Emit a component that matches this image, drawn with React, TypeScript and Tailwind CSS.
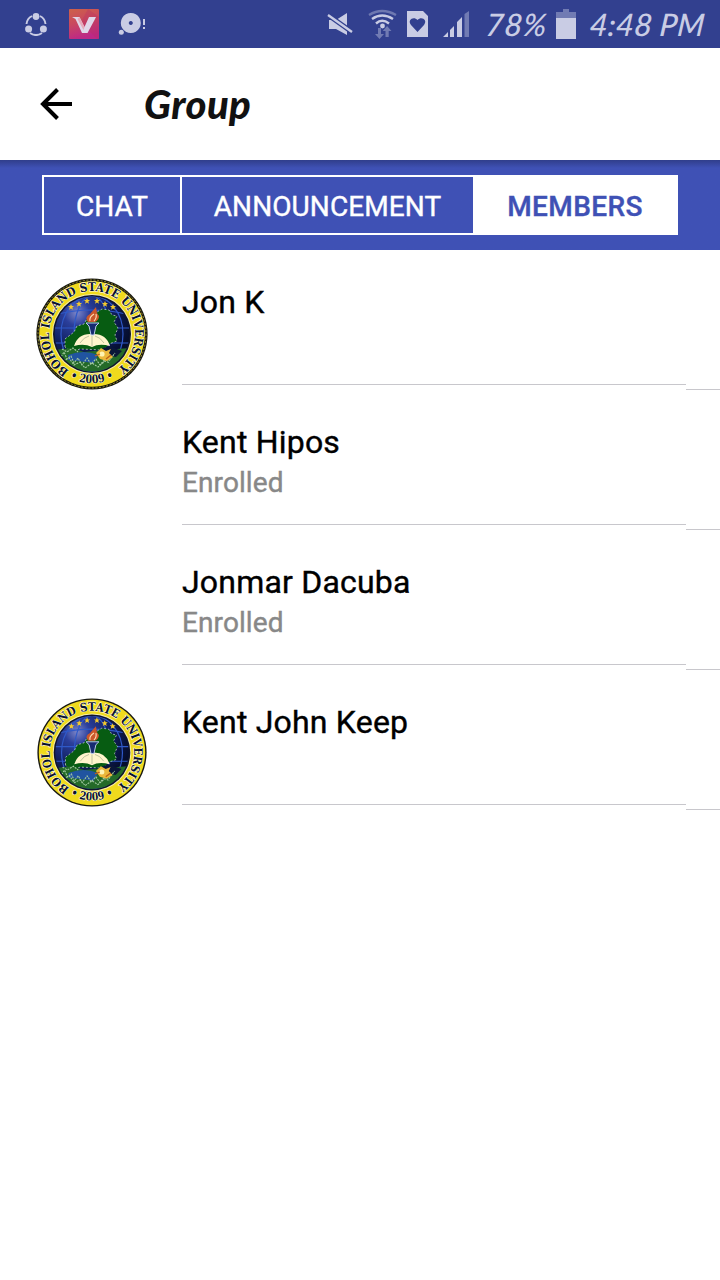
import { useId } from 'react';

type Member = { name: string; status?: string; avatar?: 'roped' | 'plain' };

const members: Member[] = [
  { name: 'Jon K', avatar: 'roped' },
  { name: 'Kent Hipos', status: 'Enrolled' },
  { name: 'Jonmar Dacuba', status: 'Enrolled' },
  { name: 'Kent John Keep', avatar: 'plain' },
];

function Star({ x, y }: { x: number; y: number }) {
  return (
    <path
      transform={`translate(${x} ${y})`}
      d="M0-3.1.9-1 3-1 1.3.5 2 2.7 0 1.5-2 2.7-1.3.5-3-1-.9-1Z"
      fill="#f3c92c"
    />
  );
}

function Seal({ roped }: { roped: boolean }) {
  const id = useId();
  return (
    <svg viewBox="-56 -56 112 112" preserveAspectRatio="none" className="h-full w-full" aria-label="University seal">
      <defs>
        <path id={`${id}t`} d="M-22.8 36.5A43 43 0 1 1 22.8 36.5" />
        <path id={`${id}b`} d="M-34 35.5A49.2 49.2 0 0 0 34 35.5" />
        <clipPath id={`${id}c`}>
          <circle r="37.5" />
        </clipPath>
        <radialGradient id={`${id}g`} cx="30%" cy="22%" r="75%">
          <stop offset="0" stopColor="#7c86c8" />
          <stop offset=".22" stopColor="#2b3f9c" />
          <stop offset=".6" stopColor="#10205f" />
          <stop offset="1" stopColor="#050d2c" />
        </radialGradient>
      </defs>
      <circle r="55.6" fill="#17170f" />
      {roped && (
        <circle r="54" fill="none" stroke="#b8ab3a" strokeWidth=".8" strokeDasharray="2 1.6" />
      )}
      <circle r={roped ? 52.8 : 54.2} fill="#f0da1d" />
      <circle r="40" fill="#f5edab" />
      <circle r="39" fill="#10142c" />
      <g clipPath={`url(#${id}c)`}>
        <circle r="38" fill={`url(#${id}g)`} />
        <g fill="none" stroke="#2f59c8" strokeWidth="1.2">
          <path d="M-38-6H38M-34-20Q0-28 34-20M-38 9H38" />
          <ellipse rx="18" ry="38" />
          <ellipse rx="31" ry="38" />
        </g>
        <path
          d="M-27 13-27 5-18-2-15-8-8-10-4-17 2-20 10-25 17-24 20-19 25-18 22-12 26-6 23 1 25 7 17 10 12 16-12 15-21 18Z"
          fill="#075c12"
          stroke="#d5dfd5"
          strokeWidth=".7"
          strokeDasharray="2 2"
        />
        <path d="M-38 16-20 14-8 18 12 16 38 14V38H-38Z" fill="#246a28" />
        <path d="M-24 21Q-8 15 6 21L2 29-24 26Z" fill="#2054a0" />
        <path d="M6 16 17 12 30 17 24 23 15 21Z" fill="#0a1638" />
        <path
          d="M-35 19l4 4 3-5 3 7 4-3 3 7 4-5 4 7 5-7 4 6 5-5 4 6 6-7 3 3 6-8M-29 27l6-3 5 7 6-3 5 6 7-5 6 4 7-6 5 2M-30 15l5 3 6-4 5 4"
          fill="none"
          stroke="#a3c8a1"
          strokeWidth="1.1"
          strokeDasharray="2 1"
        />
        <path d="M-18 12Q-14-1 0 0 14-1 18 12 7 9 0 13-8 9-18 12Z" fill="#fff5cd" />
        <path d="M0 2V12M-12 9Q-8 3-3 2M12 9Q8 3 3 2" stroke="#aeb592" strokeWidth=".8" fill="none" />
        <path d="M-6-11H7L4-8 2 1H-1L-3-8Z" fill="#172b70" stroke="#bdccec" strokeWidth="1" />
        <path d="M-4-12Q-8-17-2-20L4-27 5-21 7-18Q7-14 3-12Z" fill="#cb572b" />
        <path d="M-2-13Q-3-17 2-20M2-13Q5-16 4-20" fill="none" stroke="#ffe0b6" strokeWidth="1.1" />
        <path d="M4 19 9 14 14 17 19 15 17 19 21 23 15 27 8 25Z" fill="#ecb83b" />
        <circle cx="10" cy="20" r="2.6" fill="#fff3b1" />
        <path d="M3 22l5-2M14 25l5-4" stroke="#bd6117" strokeWidth="1.3" />
        <Star x={-21} y={-27} />
        <Star x={-13} y={-30} />
        <Star x={-5} y={-33} />
        <Star x={5} y={-33} />
        <Star x={13} y={-30} />
        <Star x={21} y={-27} />
      </g>
      <g
        fill="#07112f"
        stroke="#fffbe0"
        strokeWidth="1.2"
        paintOrder="stroke"
        className="font-['DejaVu_Serif',serif] font-bold"
      >
        <text fontSize="12">
          <textPath href={`#${id}t`} textLength="218" lengthAdjust="spacingAndGlyphs">
            BOHOL ISLAND STATE UNIVERSITY
          </textPath>
        </text>
        <text fontSize="11.5" textAnchor="middle">
          <textPath href={`#${id}b`} startOffset="50%" textLength="46" lengthAdjust="spacingAndGlyphs">
            • 2009 •
          </textPath>
        </text>
      </g>
    </svg>
  );
}

function StatusBar() {
  return (
    <header className="flex h-12 items-center bg-[#32408f] text-[#c9cce4]">
      <svg className="ml-6 h-6 w-6" viewBox="0 0 24 24" fill="none" stroke="currentColor" strokeWidth="1.9" aria-hidden>
        <path d="M8 4A10 10 0 0 0 2.5 12M16 4A10 10 0 0 1 21.5 12M6 21A10.5 10.5 0 0 0 18 21" />
        <g fill="currentColor" stroke="none">
          <circle cx="12" cy="4.5" r="3.4" />
          <circle cx="4.6" cy="17" r="3.5" />
          <circle cx="19.4" cy="17" r="3.5" />
        </g>
      </svg>
      <svg className="ml-[21px] h-[30px] w-[30px]" viewBox="0 0 30 30" aria-hidden>
        <defs>
          <linearGradient id="appTile" x1="0" y1="0" x2=".3" y2="1">
            <stop stopColor="#cd6149" />
            <stop offset=".5" stopColor="#c94860" />
            <stop offset="1" stopColor="#bd2886" />
          </linearGradient>
        </defs>
        <rect width="30" height="30" rx="1" fill="url(#appTile)" />
        <path d="M19 0 12 13 28 30H30V8Z" fill="#b72e63" opacity=".3" />
        <path d="M3 8H10.5L15.5 18 20 8H27L25.5 11 18.5 24H13L6.5 10Z" fill="#e0d7e9" />
        <path d="M10.5 8 15.5 18 14.5 21 8.5 10Z" fill="#e6a9b9" />
      </svg>
      <svg className="ml-[19px] h-7 w-7" viewBox="0 0 28 28" fill="currentColor" aria-hidden>
        <path fillRule="evenodd" d="M12.8 3a10 10 0 1 0 .01 0ZM12.8 11a2 2 0 1 1-.01 0Z" />
        <circle cx="3.3" cy="22.3" r="2.5" />
        <path d="M25 9h2v6h-2zM25 17h2v2h-2z" />
      </svg>
      <div className="ml-auto flex items-center">
        <svg className="h-12 w-[145px]" viewBox="1 0 145 48" fill="currentColor" aria-hidden>
          <path d="M3 20H10L21 13V35L10 29H3Z" />
          <path d="M2 15 26 32" stroke="#32408f" strokeWidth="5" />
          <path d="M2 15 26 32" stroke="currentColor" strokeWidth="2.4" />
          <g fill="none" stroke="currentColor" strokeWidth="2.4">
            <path d="M43 15Q56 7 70 15" opacity=".4" />
            <path d="M46 19Q56 12 67 19M50 23.5Q56 18 63 23.5" />
          </g>
          <circle cx="56.5" cy="26" r="2.4" />
          <path d="M52 28h3v6h3l-4.5 5-4.5-5h3zM59.5 37v-6h-2.8l4.4-5 4.4 5h-2.8v6z" opacity=".42" />
          <path fillRule="evenodd" d="M81 11h16l5 5v21H81ZM91.5 32l6.5-7c4-5-2.5-9-6.5-5-4-4-10.5 0-6.5 5Z" />
          <path d="M117 37l5-5v5zM124 30l4-4v11h-4zM131 22l5-5v20h-5z" />
          <path d="M138.5 14l4.500-3v26h-4.500z" opacity=".42" />
        </svg>
        <span className="ml-[14px] w-[62px] -skew-x-6 whitespace-nowrap font-['Lato',sans-serif] text-[31px] leading-none font-medium tracking-[.8px] italic">78%</span>
        <svg className="ml-2 h-[30px] w-5" viewBox="0 0 20 30" fill="currentColor" aria-hidden>
          <path d="M0 3h7V0h6v3h7v6H0z" opacity=".42" />
          <path d="M0 9h20v21H0z" />
        </svg>
        <span className="mr-4 ml-[14px] w-[114px] -skew-x-6 whitespace-nowrap font-['Lato',sans-serif] text-[31px] leading-none font-medium tracking-[.2px] italic">4:48 PM</span>
      </div>
    </header>
  );
}

export default function App() {
  return (
    <main className="flex min-h-[1280px] w-[720px] flex-col bg-white font-['Roboto',sans-serif]">
      <StatusBar />
      <div className="flex h-28 items-center bg-white">
        <button aria-label="Back" className="ml-10">
          <svg className="h-8 w-8" viewBox="0 0 32 32" fill="none" stroke="#000" strokeWidth="4" aria-hidden>
            <path d="M32 16H4M17.5 1.5 3 16 17.5 30.5" />
          </svg>
        </button>
        <h1 className="ml-[72px] font-['Lato',sans-serif] text-[40px] leading-none font-black tracking-[.4px] text-[#111] italic">Group</h1>
      </div>
      <nav className="h-[90px] bg-[#3f51b5] bg-linear-to-b from-[#303e8b] to-[#3f51b5] to-[8px] px-[42px] pt-[15px]">
        <div className="flex h-[60px] border-2 border-white text-[28px] tracking-[.1px] text-white [-webkit-text-stroke:.4px_currentColor]">
          <button className="w-[138px] border-r-2 border-white pt-[3px]">CHAT</button>
          <button className="w-[291px] pt-[3px]">ANNOUNCEMENT</button>
          <button className="flex-1 bg-white pt-[3px] pl-px font-medium tracking-[.4px] text-[#3f51b5]">MEMBERS</button>
        </div>
      </nav>
      <ul>
        {members.map((member) => (
          <li key={member.name} className="flex h-[140px]">
            <div className="w-[182px] shrink-0">
              {member.avatar === 'roped' && (
                <div className="mt-7 ml-9 h-28 w-28"><Seal roped /></div>
              )}
              {member.avatar === 'plain' && (
                <div className="mt-7 ml-[37px] h-[109px] w-[110px]"><Seal roped={false} /></div>
              )}
            </div>
            <div className="h-[135px] flex-1 border-b border-[#c8c7cc] pt-8 [-webkit-text-stroke:.4px_currentColor]">
              <h2 className="text-[32px] leading-10 tracking-[.2px] text-black">{member.name}</h2>
              {member.status && <p className="pt-px text-[28px] leading-10 tracking-[.1px] text-[#888]">{member.status}</p>}
            </div>
            <div className="w-[34px] border-b border-[#c8c7cc]" />
          </li>
        ))}
      </ul>
    </main>
  );
}
